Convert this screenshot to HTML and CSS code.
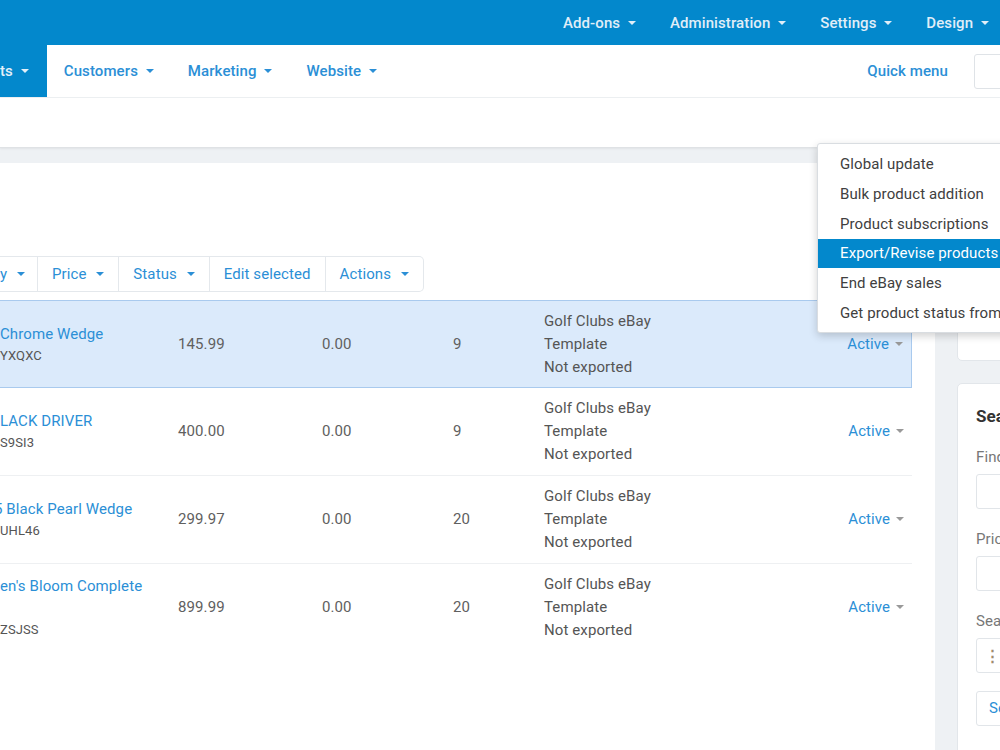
FILE: index.html
```html
<!DOCTYPE html>
<html>
<head>
  <title>Products | Admin</title>
  <link rel="stylesheet" href="styles.css">
</head>
<body>
  <div class="topbar">
    <ul class="topnav">
      <li>Add-ons <span class="caret"></span></li>
      <li>Administration <span class="caret"></span></li>
      <li>Settings <span class="caret"></span></li>
      <li>Design <span class="caret"></span></li>
    </ul>
  </div>

  <div class="mainnav">
    <ul class="menu">
      <li class="active">ts <span class="caret"></span></li>
      <li>Customers <span class="caret"></span></li>
      <li>Marketing <span class="caret"></span></li>
      <li>Website <span class="caret"></span></li>
    </ul>
    <div class="quick">
      <a href="#">Quick menu</a>
      <span class="quick-box"></span>
    </div>
  </div>

  <div class="titlebar"></div>

  <div class="layout">
    <div class="content">
      <div class="toolbar">
        <span class="btn first">y <span class="caret"></span></span>
        <span class="btn">Price <span class="caret"></span></span>
        <span class="btn">Status <span class="caret"></span></span>
        <span class="btn">Edit selected</span>
        <span class="btn">Actions <span class="caret"></span></span>
      </div>

      <div class="products">
        <div class="row selected">
          <div class="name"><a href="#">Chrome Wedge</a><span class="code">YXQXC</span></div>
          <div class="price">145.99</div>
          <div class="disc">0.00</div>
          <div class="qty">9</div>
          <div class="ebay">Golf Clubs eBay<br>Template<br>Not exported</div>
          <div class="status"><a href="#">Active</a> <span class="caret"></span></div>
        </div>
        <div class="row">
          <div class="name"><a href="#">LACK DRIVER</a><span class="code">S9SI3</span></div>
          <div class="price">400.00</div>
          <div class="disc">0.00</div>
          <div class="qty">9</div>
          <div class="ebay">Golf Clubs eBay<br>Template<br>Not exported</div>
          <div class="status"><a href="#">Active</a> <span class="caret"></span></div>
        </div>
        <div class="row">
          <div class="name"><a href="#" class="cut">5 Black Pearl Wedge</a><span class="code">UHL46</span></div>
          <div class="price">299.97</div>
          <div class="disc">0.00</div>
          <div class="qty">20</div>
          <div class="ebay">Golf Clubs eBay<br>Template<br>Not exported</div>
          <div class="status"><a href="#">Active</a> <span class="caret"></span></div>
        </div>
        <div class="row last">
          <div class="name"><a href="#">en's Bloom Complete<br>&nbsp;</a><span class="code">ZSJSS</span></div>
          <div class="price">899.99</div>
          <div class="disc">0.00</div>
          <div class="qty">20</div>
          <div class="ebay">Golf Clubs eBay<br>Template<br>Not exported</div>
          <div class="status"><a href="#">Active</a> <span class="caret"></span></div>
        </div>
      </div>
    </div>

    <div class="sidebar">
      <div class="card card-top"></div>
      <div class="card search">
        <h3>Search</h3>
        <label>Find results with</label>
        <div class="field"></div>
        <label>Price</label>
        <div class="field"></div>
        <label>Search in category</label>
        <div class="field"><span class="dots">&#x22EE;</span></div>
        <span class="search-btn">Search</span>
      </div>
    </div>
  </div>

  <ul class="dropdown">
    <li>Global update</li>
    <li>Bulk product addition</li>
    <li>Product subscriptions</li>
    <li class="hover">Export/Revise products</li>
    <li>End eBay sales</li>
    <li>Get product status from eBay</li>
  </ul>
</body>
</html>
```

FILE: styles.css
```css
html, body {margin: 0; padding: 0;}
body {
  font: 15px Roboto, "Liberation Sans", sans-serif;
  letter-spacing: 0.1px;
  color: #555;
  background: #eef1f4;
  overflow: hidden;
  width: 1000px;
  height: 750px;
  position: relative;
}
a, a:visited {color: #2b8fd6; text-decoration: none;}
ul {list-style: none; margin: 0; padding: 0;}

.caret {
  display: inline-block;
  width: 0;
  height: 0;
  border-left: 4px solid transparent;
  border-right: 4px solid transparent;
  border-top: 4px solid currentColor;
  vertical-align: middle;
  margin-left: 4px;
  position: relative;
  top: -1px;
}

/* top blue bar */
.topbar {
  height: 45px;
  background: #0388cc;
  display: flex;
  justify-content: flex-end;
}
.topnav {display: flex;}
.topnav li {
  color: #e0eef8;
  font-weight: 500;
  line-height: 47px;
  padding: 0 17px;
  white-space: nowrap;
}
.topnav li:last-child {padding-right: 11px;}

/* second bar */
.mainnav {
  height: 52px;
  background: #fff;
  border-bottom: 1px solid #edf0f2;
  display: flex;
  justify-content: space-between;
}
.menu {display: flex;}
.menu li {
  color: #2b8fd6;
  font-weight: 500;
  line-height: 52px;
  padding: 0 17px;
  white-space: nowrap;
}
.menu li.active {
  background: #0388cc;
  color: #e3f0f9;
  padding: 0 18px 0 0;
}
.quick {
  display: flex;
  align-items: center;
  gap: 26px;
}
.quick a {font-weight: 500;}
.quick-box {
  width: 40px;
  height: 33px;
  border: 1px solid #dfe3e7;
  border-radius: 3px;
  margin-right: -16px;
}

.titlebar {
  height: 49px;
  background: #fff;
  border-bottom: 1px solid #dfe2e5;
  box-shadow: 0 1px 2px rgba(0, 0, 0, 0.06);
}

/* main layout */
.layout {
  display: grid;
  grid-template-columns: 935px 280px;
  column-gap: 22px;
  margin-top: 15px;
}
.content {
  background: #fff;
  padding: 93px 23px 0 0;
  height: 600px;
}

.toolbar {
  display: inline-flex;
  border: 1px solid #e4e8ec;
  border-left: 0;
  border-radius: 0 5px 5px 0;
  height: 34px;
}
.btn {
  color: #2b8fd6;
  line-height: 34px;
  padding: 0 14px;
  border-left: 1px solid #e4e8ec;
  white-space: nowrap;
}
.btn .caret {margin-left: 6px;}
.btn.first {padding-left: 0; border-left: 0; padding-right: 12px;}

.products {margin-top: 8px;}
.row {
  display: grid;
  grid-template-columns: 178px 144px 131px 91px 1fr 120px;
  align-items: center;
  padding: 9px 8px 9px 0;
  border-bottom: 1px solid #eef0f2;
  line-height: 23px;
}
.row.selected {
  background: #dbeafb;
  border: 1px solid #a9caee;
  border-left: 0;
  padding-top: 9px;
  padding-bottom: 8px;
}
.row.last {border-bottom: 0;}
.name a {display: block; line-height: 22px;}
.name .cut {text-indent: -6px;}
.code {display: block; line-height: 22px; font-size: 13px; color: #555;}
.price, .disc, .qty {color: #606060;}
.status {text-align: right;}
.status .caret {color: #999; margin-left: 2px;}

/* sidebar */
.card {
  background: #fff;
  border: 1px solid #e2e6ea;
  border-radius: 5px;
}
.card-top {height: 196px;}
.search {
  margin-top: 22px;
  padding: 21px 18px 20px;
  display: flex;
  flex-direction: column;
  align-items: flex-start;
  height: 400px;
}
.search h3 {
  margin: 0 0 20px;
  font-size: 17px;
  line-height: 22px;
  color: #333;
}
.search label {color: #777; line-height: 20px; margin-bottom: 7px;}
.field {
  width: 240px;
  height: 33px;
  border: 1px solid #e1e5e9;
  border-radius: 3px;
  margin-bottom: 20px;
  display: flex;
  align-items: center;
}
.dots {color: #a08a6c; padding-left: 8px; font-weight: bold;}
.search-btn {
  margin-top: -2px;
  color: #2b8fd6;
  border: 1px solid #e1e5e9;
  border-radius: 3px;
  line-height: 33px;
  padding: 0 12px;
}

/* actions dropdown */
.dropdown {
  position: absolute;
  left: 817px;
  top: 143px;
  width: 230px;
  background: #fff;
  border: 1px solid #d9dde1;
  border-radius: 3px;
  box-shadow: 0 3px 8px rgba(0, 0, 0, 0.18);
  padding: 5px 0 4px;
}
.dropdown li {
  line-height: 30px;
  padding: 0 22px;
  color: #404040;
  white-space: nowrap;
}
.dropdown li.hover {background: #0388cc; color: #fff; line-height: 29px;}
```
